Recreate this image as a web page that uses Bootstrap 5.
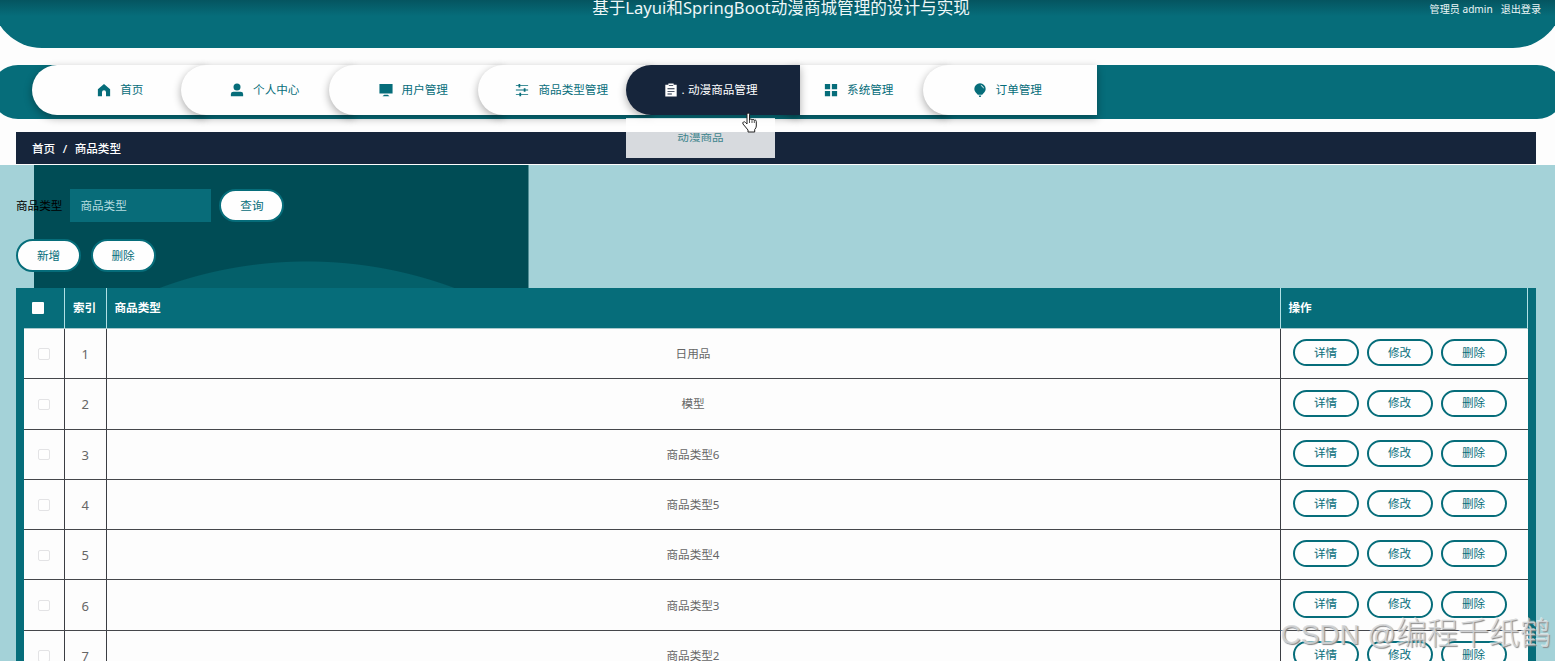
<!DOCTYPE html>
<html lang="zh-CN">
<head>
<meta charset="utf-8">
<meta name="viewport" content="width=device-width, initial-scale=1">
<title>基于Layui和SpringBoot动漫商城管理的设计与实现</title>
<link href="https://cdn.jsdelivr.net/npm/bootstrap@5.3.0/dist/css/bootstrap.min.css" rel="stylesheet">
<style>
:root{--teal:#066d7a;--navy:#16253b;--pale:#a4d2d8}
body{font-family:"Noto Sans","Noto Sans CJK SC",sans-serif;font-size:11.6px;line-height:16px;height:661px;overflow:hidden;background:#fdfdfd;color:#000}
.page-wrap{height:661px;overflow:hidden}
.top-bar{height:68px;margin:-20px -8px 0;padding-top:20px;border-radius:0 0 50px 50px;background:linear-gradient(#055560 20px,#066d7a 36px);color:#edf7f8}
.top-title{font-size:16.6px;line-height:16px;grid-area:1/1;padding-left:7px}
.top-user{font-size:10.1px;line-height:19px;padding-right:22px;grid-area:1/1;gap:8px}
.menu-bar{height:54px;margin:17px -9px 0;padding-left:41px;border-radius:27px;background:var(--teal)}
.menu-item{width:173.5px;height:49.5px;margin-right:-25px;border-radius:25px 0 0 25px;background:#fefefe;color:var(--teal);box-shadow:0 3px 8px rgba(0,0,0,.33);padding-right:5px;gap:9px}
.menu-item svg{width:14px;height:14px;fill:currentColor;flex:none}
.menu-item.first{padding-right:0;padding-left:3px}
.menu-item.current{background:var(--navy);color:#fff;z-index:3;gap:2px;padding-right:4px}
.menu-item.current .dot{width:6px;text-align:center}
.sub-menu{top:52.5px;left:0;width:149px;height:40px;background:rgba(255,255,255,.83);color:#3f858d}
.sub-menu span{transform:scaleY(.82)}
.menu-item .hand{left:116px;top:47px;width:15px;height:21px}
.crumb-bar{height:32px;margin:13px 19px 0 16px;padding:1px 0 0 16px;background:var(--navy);color:#fff;font-weight:500;gap:7.5px}
.main-area{height:497px;margin-top:1px;position:relative;background:
 radial-gradient(circle 423px at 307px 519.5px,#04606a 422.5px,transparent 423.5px) 0 0/528.5px 124px no-repeat,
 linear-gradient(90deg,transparent 34px,#004c55 34px) 0 0/528.5px 124px no-repeat,var(--pale)}
.main-area>.content{padding:24px 19px 0 16px}
.search-box{width:141px;height:33px;margin:0 8px 0 8px;padding:0 10px;border:0;border-radius:0;background:#086c79;color:#b5dce0;font-size:11.6px}
.search-box::placeholder{color:#b5dce0;opacity:1}
.pill{border:2px solid var(--teal);border-radius:17px;background:#fefefe;color:var(--teal);font-size:11.6px;line-height:16px;padding:0}
.pill.big{width:65px;height:33px}
.pill.slim{width:66px;height:27px}
.action-line{margin-top:17px;gap:9.5px}
.grid-box{margin-top:16px;background:var(--teal);padding:0 8px;height:400px}
.grid-row{display:grid;grid-template-columns:41px 41.5px 1174px 247px}
.grid-row>div{display:flex;align-items:center;justify-content:center;border-right:1px solid #3b3d42}
.head-row{height:41px;color:#fff;font-weight:700;border-bottom:1px solid #a9c9cd}
.head-row>div{justify-content:flex-start;padding-left:8px;border-color:#b0e0e5}
.body-row{height:50.3px;background:#fdfdfd;border-bottom:1px solid #45474b;color:#666}
.body-row>div{padding-top:1px}
.body-row>div:last-child{border-right:0;justify-content:flex-start;align-items:flex-start;padding:10.3px 0 0 12px;gap:8px}
.body-row .num{font-size:13px}
.tick{width:11.5px;height:11.5px;border:1px solid #e3e3e5;border-radius:2px;background:#fefefe}
.tick.all{border:0;border-radius:1px}
.site-mark{right:4px;bottom:8px;font-family:"Liberation Sans","Noto Sans CJK SC",sans-serif;font-size:31px;line-height:36px;font-weight:300;color:rgba(214,216,218,.85);text-shadow:1px 1px 1px #888,-1px -1px 0 rgba(255,255,255,.5);white-space:nowrap}
.site-mark span{font-size:28px}
</style>
</head>
<body>
<div class="page-wrap">
<header class="top-bar d-grid align-items-start">
 <div class="top-title text-center">基于Layui和SpringBoot动漫商城管理的设计与实现</div>
 <div class="top-user d-flex justify-content-end"><span>管理员 admin</span><span>退出登录</span></div>
</header>
<nav class="menu-bar d-flex">
 <div class="menu-item first position-relative d-flex align-items-center justify-content-center"><svg viewBox="0 0 16 16"><path d="M8 1 1 7.2V15h4.7v-4.5a2.3 2.3 0 0 1 4.6 0V15H15V7.200Z"/></svg><span>首页</span></div>
 <div class="menu-item position-relative d-flex align-items-center justify-content-center"><svg viewBox="0 0 16 16"><circle cx="8" cy="4.500" r="4"/><path d="M1 15v-2.500Q1 10 4 10h8q3 0 3 2.500V15Z"/></svg><span>个人中心</span></div>
 <div class="menu-item position-relative d-flex align-items-center justify-content-center"><svg viewBox="0 0 16 16"><path d="M.5 1h15v11H.5ZM6 13.500h4l2 1.500H4Z"/></svg><span>用户管理</span></div>
 <div class="menu-item position-relative d-flex align-items-center justify-content-center"><svg viewBox="0 0 16 16"><path d="M1 2.500h14v1H1ZM1 7.500h14v1H1ZM1 12.500h14v1H1ZM4 1h2v4H4ZM10 6h2v4h-2ZM5 11h2v4H5Z"/></svg><span>商品类型管理</span></div>
 <div class="menu-item current position-relative d-flex align-items-center justify-content-center"><svg viewBox="0 0 16 16"><path fill-rule="evenodd" d="M1.500 2H5V.5h6V2h3.500v13.500h-13ZM5.500 3.500h5V2.700h-5ZM4 6v1h8V6ZM4 9v1h8V9ZM4 12v1h5v-1Z"/></svg><span class="dot">.</span><span>动漫商品管理</span>
  <div class="sub-menu position-absolute d-flex align-items-center justify-content-center"><span>动漫商品</span></div>
  <svg class="hand position-absolute" viewBox="0 0 15 21"><path d="M5 12V2.500Q5 1 6.200 1T7.500 2.500V8q0-1 1.200-1T10 8.200q0-.8 1.100-.8t1.200 1.200q0-.6 1-.5T14.300 9.500V14q0 2-1.600 3.500V20H6v-2L1 12q-.7-1.300.4-2T3.500 10.500Z" fill="#fff" stroke="#222" stroke-width="1"/><path d="M7.500 8v3M10 8.500V11M12.300 9v2" stroke="#222" stroke-width=".8"/></svg>
 </div>
 <div class="menu-item position-relative d-flex align-items-center justify-content-center"><svg viewBox="0 0 16 16"><path d="M1 1h6v6H1ZM9 1h6v6H9ZM1 9h6v6H1ZM9 9h6v6H9Z"/></svg><span>系统管理</span></div>
 <div class="menu-item position-relative d-flex align-items-center justify-content-center"><svg viewBox="0 0 16 16"><path d="M8 .3A6.500 6.500 0 0 0 1.500 6.800c0 3 2.500 4.700 4 6.700h5c1.500-2 4-3.700 4-6.700A6.500 6.500 0 0 0 8 .3ZM6.500 14.300h3L8.800 16H7.200Z"/><path d="M9 2.800q2.600.7 3 3.200" fill="none" stroke="#fff"/></svg><span>订单管理</span></div>
</nav>
<div class="crumb-bar d-flex align-items-center"><span>首页</span><span>/</span><span>商品类型</span></div>
<main class="main-area">
 <div class="content">
  <div class="d-flex align-items-center"><label for="kind">商品类型</label><input id="kind" class="search-box" placeholder="商品类型"><button class="pill big">查询</button></div>
  <div class="action-line d-flex"><button class="pill big">新增</button><button class="pill big">删除</button></div>
  <div class="grid-box">
   <div class="grid-row head-row"><div><span class="tick all"></span></div><div>索引</div><div>商品类型</div><div>操作</div></div>
   <div id="rows"></div>
  </div>
 </div>
</main>
</div>
<div class="site-mark position-absolute"><span>CSDN @</span>编程千纸鹤</div>
<script src="https://cdn.jsdelivr.net/npm/bootstrap@5.3.0/dist/js/bootstrap.bundle.min.js"></script>
<script>
document.getElementById('rows').innerHTML=['日用品','模型','商品类型6','商品类型5','商品类型4','商品类型3','商品类型2'].map((t,i)=>
 `<div class="grid-row body-row"><div><span class="tick"></span></div><div class="num">${i+1}</div><div>${t}</div><div><button class="pill slim">详情</button><button class="pill slim">修改</button><button class="pill slim">删除</button></div></div>`).join('');
</script>
</body>
</html>
